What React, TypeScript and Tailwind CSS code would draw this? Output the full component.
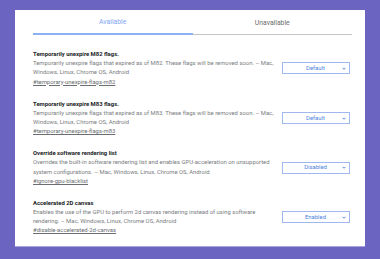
const flags = [
  {
    title: "Temporarily unexpire M82 flags.",
    lines: [
      "Temporarily unexpire flags that expired as of M82. These flags will be removed soon. – Mac,",
      "Windows, Linux, Chrome OS, Android",
    ],
    link: "#temporary-unexpire-flags-m82",
    value: "Default",
  },
  {
    title: "Temporarily unexpire M83 flags.",
    lines: [
      "Temporarily unexpire flags that expired as of M83. These flags will be removed soon. – Mac,",
      "Windows, Linux, Chrome OS, Android",
    ],
    link: "#temporary-unexpire-flags-m83",
    value: "Default",
  },
  {
    title: "Override software rendering list",
    lines: [
      "Overrides the built-in software rendering list and enables GPU-acceleration on unsupported",
      "system configurations. – Mac, Windows, Linux, Chrome OS, Android",
    ],
    link: "#ignore-gpu-blacklist",
    value: "Disabled",
  },
  {
    title: "Accelerated 2D canvas",
    lines: [
      "Enables the use of the GPU to perform 2d canvas rendering instead of using software",
      "rendering. – Mac, Windows, Linux, Chrome OS, Android",
    ],
    link: "#disable-accelerated-2d-canvas",
    value: "Enabled",
  },
];

export default function App() {
  return (
    <div
      className="h-[259px] w-[380px] bg-[#6c64c1] px-[15px] pt-[10px]"
      style={{ fontFamily: "Roboto, 'Liberation Sans', sans-serif" }}
    >
      <div className="h-[236px] bg-white pl-[18px] pr-[13px] shadow-[0_1px_0_#a9a3e0]">
        {/* Tabs */}
        <div className="flex h-[25px]">
          <div className="flex flex-1 items-end justify-center border-b-2 border-[#8ab0f5] pb-[6px] text-[6.8px] text-[#7fa6f5]">
            Available
          </div>
          <div className="flex flex-1 items-end justify-center border-b border-[#c4c4c4] pb-[6px] text-[6.8px] text-[#6b6b6b]">
            Unavailable
          </div>
        </div>

        {/* Flags */}
        <div className="pt-[15px]">
          {flags.map((flag) => (
            <div key={flag.link} className="mb-[12.8px] flex items-center">
              <div className="flex-1 text-[5.9px] leading-[9.2px]">
                <div className="text-[5.9px] font-bold text-[#202124]">{flag.title}</div>
                {flag.lines.map((line) => (
                  <div key={line} className="text-[#7a7d81]">
                    {line}
                  </div>
                ))}
                <div className="text-[#6a6d71] underline">{flag.link}</div>
              </div>
              <div className="mr-[2px] flex h-[12px] w-[68px] shrink-0 items-center border border-[#9fb8ef] pl-[6px] pr-[3px] text-[5.9px] text-[#4f7fe0]">
                <span className="flex-1 text-center">{flag.value}</span>
                <svg width="4" height="3" viewBox="0 0 10 8">
                  <path d="M1 2l4 4 4-4" fill="none" stroke="#4f7fe0" strokeWidth="2.5" />
                </svg>
              </div>
            </div>
          ))}
        </div>
      </div>
    </div>
  );
}
